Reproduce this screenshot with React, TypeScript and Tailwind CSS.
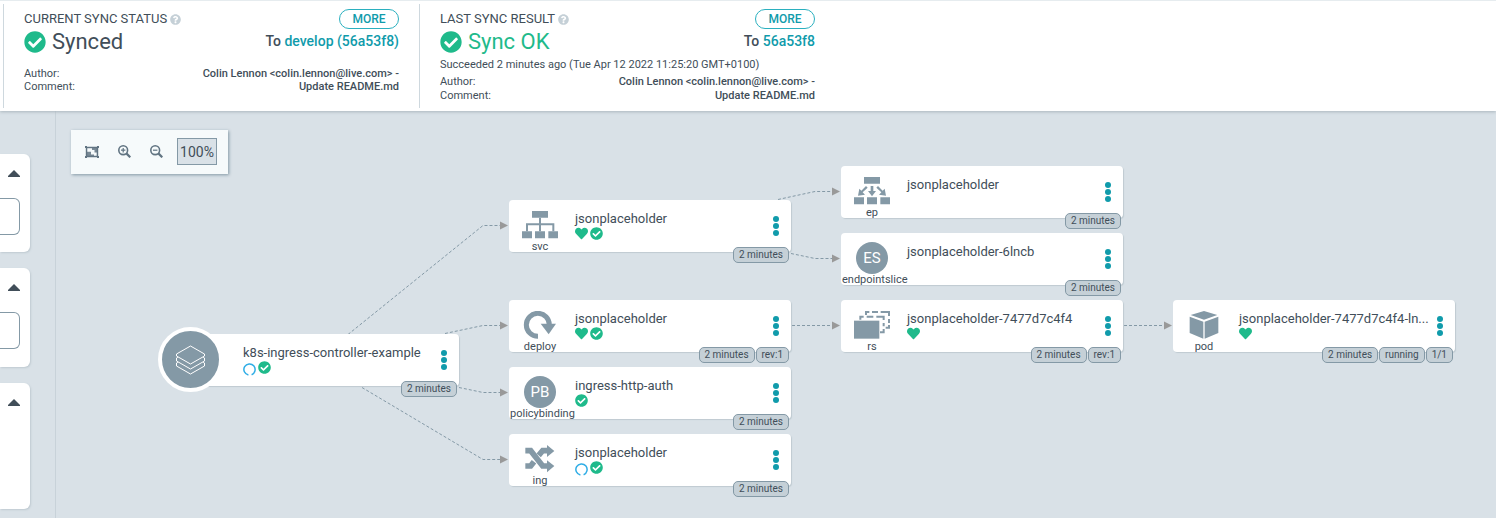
import type { ReactNode } from 'react';
import { FaCheckCircle, FaHeart, FaQuestionCircle } from 'react-icons/fa';

type Status = 'progressing' | 'healthy' | 'synced';

interface ResourceNode {
  id: string;
  name: string;
  kind?: string;
  icon: ReactNode;
  place: string;
  statuses: Status[];
  tags: string[];
}

function ServiceIcon() {
  return (
    <svg viewBox="0 0 108 84" className="h-7 w-9 fill-[#8499a6]" aria-hidden="true">
      <path d="M30 0h48v20H30zM0 61h30v21H0zM39 61h30v21H39zM79 61h29v21H79z" />
      <path d="M12 37h85v24h-6V43H57v18h-6V43H18v18h-6zM51 20h6v18h-6z" />
    </svg>
  );
}

function EndpointIcon() {
  return (
    <svg viewBox="0 0 108 84" className="h-7 w-9 fill-[#8499a6]" aria-hidden="true">
      <path d="M30 0h48v20H30zM0 61h30v21H0zM39 61h30v21H39zM79 61h29v21H79z" />
      <path d="M36 27l5 5-15 14 7 7-21 3 4-21 6 6zM72 27l-5 5 15 14-7 7 21 3-4-21-6 6zM50 27h8v15h8L54 58 42 42h8z" />
    </svg>
  );
}

function DeployIcon() {
  return (
    <svg viewBox="0 0 108 84" className="h-7 w-9" aria-hidden="true">
      <path d="M48 76A34.500 34.500 0 1 1 82 42" fill="none" stroke="#8499a6" strokeWidth="15" />
      <path d="M56 38h46L80 70z" fill="#8499a6" />
    </svg>
  );
}

function IngressIcon() {
  return (
    <svg viewBox="0 0 108 84" className="h-7 w-9" aria-hidden="true">
      <g fill="none" stroke="#8499a6" strokeWidth="17">
        <path d="M10 17h16l36 46h16" />
        <path d="M10 63h16l10-13M50 31l12-14h16" />
      </g>
      <path d="M75 0l22 18-22 18zM75 46l22 17-22 19z" fill="#8499a6" />
    </svg>
  );
}

function ReplicaSetIcon() {
  return (
    <svg viewBox="0 0 108 84" className="h-7 w-9" aria-hidden="true">
      <path d="M0 29h76v54H0z" fill="#8499a6" />
      <g fill="none" stroke="#8499a6" strokeWidth="6">
        <path d="M19 26V17h10M38 17h20M67 17h22v10M89 36v10M89 54v10H78" />
        <path d="M36 12V3h10M54 3h18M80 3h25v12M105 24v12M105 42v8H95" />
      </g>
    </svg>
  );
}

function PodIcon() {
  return (
    <svg viewBox="0 0 108 84" className="h-7 w-9 fill-[#8499a6]" aria-hidden="true">
      <path d="M54 0l40 12-40 14-40-14zM11 17l41 15v51L11 66zM97 17L56 32v51l41-17z" />
    </svg>
  );
}

function Initials({ text }: { text: string }) {
  return (
    <span className="flex size-8 items-center justify-center rounded-full bg-[#8499a6] text-[15px] text-white">
      {text}
    </span>
  );
}

function LayersIcon() {
  return (
    <svg viewBox="0 0 30 30" className="size-[30px]" fill="none" stroke="#fff" strokeWidth="1" strokeLinejoin="round" aria-hidden="true">
      <path d="M14.500 1l14 8v2l-14 8-14-8V9z" />
      <path d="M2 12L.5 13v3l14 8 14-8v-3L27 12" />
      <path d="M2 17L.5 18v3l14 8 14-8v-3L27 17" />
    </svg>
  );
}

function MagnifierIcon({ plus = false }: { plus?: boolean }) {
  return (
    <svg viewBox="0 0 13 13" className="size-[13px]" fill="none" stroke="currentColor" aria-hidden="true">
      <circle cx="5.200" cy="5.200" r="4.400" strokeWidth="1.600" />
      <path d="M8.600 8.600l3.700 3.700" strokeWidth="2.200" />
      <path d={plus ? 'M3 5.200h4.400M5.200 3v4.400' : 'M3 5.200h4.400'} strokeWidth="1.200" />
    </svg>
  );
}

function StatusIcon({ status }: { status: Status }) {
  if (status === 'healthy') return <FaHeart className="size-[13px] text-[#1fba8b]" title="Healthy" />;
  if (status === 'synced') return <FaCheckCircle className="size-[13px] text-[#1fba8b]" title="Synced" />;
  return (
    <svg viewBox="0 0 13 13" className="mt-0.5 size-[13px]" fill="none" role="img" aria-label="Progressing">
      <path d="M5.400 12A5.600 5.600 0 1 1 8.600 11.700" stroke="#2fade6" strokeWidth="1.500" />
    </svg>
  );
}

const nodes: ResourceNode[] = [
  { id: 'svc', name: 'jsonplaceholder', kind: 'svc', icon: <ServiceIcon />, place: 'left-[453px] top-[89px]', statuses: ['healthy', 'synced'], tags: ['2 minutes'] },
  { id: 'deploy', name: 'jsonplaceholder', kind: 'deploy', icon: <DeployIcon />, place: 'left-[453px] top-[189px]', statuses: ['healthy', 'synced'], tags: ['2 minutes', 'rev:1'] },
  { id: 'pb', name: 'ingress-http-auth', kind: 'policybinding', icon: <Initials text="PB" />, place: 'left-[453px] top-[256px]', statuses: ['synced'], tags: ['2 minutes'] },
  { id: 'ing', name: 'jsonplaceholder', kind: 'ing', icon: <IngressIcon />, place: 'left-[453px] top-[323px]', statuses: ['progressing', 'synced'], tags: ['2 minutes'] },
  { id: 'ep', name: 'jsonplaceholder', kind: 'ep', icon: <EndpointIcon />, place: 'left-[785px] top-[55px]', statuses: [], tags: ['2 minutes'] },
  { id: 'es', name: 'jsonplaceholder-6lncb', kind: 'endpointslice', icon: <Initials text="ES" />, place: 'left-[785px] top-[122px]', statuses: [], tags: ['2 minutes'] },
  { id: 'rs', name: 'jsonplaceholder-7477d7c4f4', kind: 'rs', icon: <ReplicaSetIcon />, place: 'left-[785px] top-[189px]', statuses: ['healthy'], tags: ['2 minutes', 'rev:1'] },
  { id: 'pod', name: 'jsonplaceholder-7477d7c4f4-ln...', kind: 'pod', icon: <PodIcon />, place: 'left-[1117px] top-[189px]', statuses: ['healthy'], tags: ['2 minutes', 'running', '1/1'] },
];

const root: ResourceNode = {
  id: 'root', name: 'k8s-ingress-controller-example', icon: null, place: 'left-[121px] top-[223px]', statuses: ['progressing', 'synced'], tags: ['2 minutes'],
};

function NodeCard({ node }: { node: ResourceNode }) {
  return (
    <article className={`absolute flex h-[52px] w-[282px] rounded bg-white shadow-[1px_1px_1px_#bfcad1] ${node.place}`}>
      {node.kind ? (
        <div className="flex w-[66px] shrink-0 pt-[9px] pl-px">
          <div className="w-[60px]">
            <div className="flex h-8 items-center justify-center">{node.icon}</div>
            <div className="text-center text-[11px] leading-[11px]">{node.kind}</div>
          </div>
        </div>
      ) : (
        <div className="w-[66px] shrink-0">
          <div className="absolute -top-[7px] -left-[19px] flex size-[65px] items-center justify-center rounded-full border-4 border-white bg-[#8499a6]">
            <LayersIcon />
          </div>
        </div>
      )}
      <div className="min-w-0 flex-1 pt-[11px]">
        <h3 className="text-[13px] leading-4 whitespace-nowrap">{node.name}</h3>
        <div className="flex items-start gap-0.5">
          {node.statuses.map((s) => <StatusIcon key={s} status={s} />)}
        </div>
      </div>
      <button type="button" aria-label={`Actions for ${node.name}`} className="flex w-[30px] shrink-0 items-center justify-center">
        <svg viewBox="0 0 6 20" className="h-5 w-1.5 fill-[#109bab]" aria-hidden="true">
          <circle cx="3" cy="3" r="3" />
          <circle cx="3" cy="10" r="3" />
          <circle cx="3" cy="17" r="3" />
        </svg>
      </button>
      <div className="absolute right-0.5 -bottom-[11px] flex gap-px">
        {node.tags.map((tag) => (
          <span key={tag} className="h-4 rounded-[5px] border border-[#8499a6] bg-[#c5d0d7] px-[5px] text-[10px] leading-[14px] whitespace-nowrap">
            {tag}
          </span>
        ))}
      </div>
    </article>
  );
}

const edges = [
  'M292 223L427 114H444',
  'M389 222L427 214H444',
  'M403 276L427 281H444',
  'M306 276L427 348H444',
  'M722 88L759 80H776',
  'M735 142L759 147H776',
  'M736 214H776',
  'M1068 214H1108',
];

const arrowHeads = [[444, 114], [444, 214], [444, 281], [444, 348], [776, 80], [776, 147], [776, 214], [1108, 214]];

function Edges() {
  return (
    <svg className="absolute top-0 left-0 h-[407px] w-[1440px]" viewBox="0 0 1440 407" aria-hidden="true">
      <g transform="translate(0 .5)">
        {edges.map((d) => <path key={d} d={d} fill="none" stroke="#8499a6" strokeDasharray="3 2" />)}
        {arrowHeads.map(([x, y]) => <path key={`${x}-${y}`} d={`M${x} ${y - 4}l8 4-8 4z`} fill="#999" />)}
      </g>
    </svg>
  );
}

interface SyncPanelProps {
  title: string;
  state: string;
  stateColor: string;
  revision: string;
  note?: string;
}

function SyncPanel({ title, state, stateColor, revision, note }: SyncPanelProps) {
  return (
    <section className="w-[416px] border-l border-[#ced8de] px-5 pt-[5px]">
      <div className="flex h-5 items-center justify-between">
        <h2 className="flex items-center gap-[3px] text-[13px]">
          {title}
          <FaQuestionCircle className="size-[11px] text-[#c5d0d7]" />
        </h2>
        <button type="button" className="h-5 w-[60px] rounded-full border border-[#2bb0bf] text-[12px] leading-[18px] font-medium text-[#109bab]">
          MORE
        </button>
      </div>
      <div className="flex h-[25px] items-center justify-between">
        <div className={`flex items-center gap-1.5 text-[22px] ${stateColor}`}>
          <FaCheckCircle className="size-[22px] text-[#1fba8b]" />
          {state}
        </div>
        <div className="text-[14px] font-medium">
          To <a href="#revision" className="text-[#109bab]">{revision}</a>
        </div>
      </div>
      {note && <p className="mt-0.5 text-[11px] leading-[18px]">{note}</p>}
      <dl className={note ? 'mt-px grid grid-cols-[auto_1fr] text-[11px] leading-[14px]' : 'mt-[13px] grid grid-cols-[auto_1fr] text-[11px] leading-[13px]'}>
        <dt>Author:</dt>
        <dd className="text-right font-medium">Colin Lennon &lt;colin.lennon@live.com&gt; -</dd>
        <dt>Comment:</dt>
        <dd className="text-right font-medium">Update README.md</dd>
      </dl>
    </section>
  );
}

function FilterCard({ label, height, hasInput }: { label: string; height: string; hasInput: boolean }) {
  return (
    <section className={`w-[30px] rounded-r-md bg-white pt-4 pr-2.5 shadow-[1px_1px_2px_#bfcad1] ${height}`}>
      <button type="button" aria-label={`Collapse ${label}`} className="ml-auto block">
        <svg viewBox="0 0 12 7" className="h-[7px] w-3 fill-[#414e59]" aria-hidden="true">
          <path d="M6 0l6 6v1H0V6z" />
        </svg>
      </button>
      {hasInput && (
        <input aria-label={label} className="mt-[21px] block h-[37px] w-full rounded-r-md border border-l-0 border-[#8499a6] bg-white" />
      )}
    </section>
  );
}

export default function App() {
  return (
    <div className="flex min-h-screen flex-col overflow-hidden bg-[#d9e1e7] font-[Roboto,sans-serif] text-[#414e59]">
      <header className="relative z-10 flex h-[111px] border-t border-[#e6ecef] bg-white py-[3px] pl-[3px] shadow-[0_1px_3px_#aab6be]">
        <SyncPanel title="CURRENT SYNC STATUS" state="Synced" stateColor="text-[#414e59]" revision="develop (56a53f8)" />
        <SyncPanel
          title="LAST SYNC RESULT"
          state="Sync OK"
          stateColor="text-[#1fba8b]"
          revision="56a53f8"
          note="Succeeded 2 minutes ago (Tue Apr 12 2022 11:25:20 GMT+0100)"
        />
      </header>
      <div className="flex flex-1">
        <aside className="flex w-14 shrink-0 flex-col gap-4 border-r border-[#c8d2d9] pt-[43px]">
          <FilterCard label="Name" height="h-[98px]" hasInput />
          <FilterCard label="Kinds" height="h-[99px]" hasInput />
          <FilterCard label="Sync status" height="h-[126px]" hasInput={false} />
        </aside>
        <main className="relative min-w-0 flex-1">
          <Edges />
          <div className="relative mt-[19px] ml-[15px] flex h-11 w-fit items-center bg-[#f6fafb] pr-[11px] pb-px pl-[5px] text-[#617482] shadow-[1px_1px_3px_#8499a6]">
            <button type="button" aria-label="Fit to screen" className="flex size-8 items-center justify-center">
              <svg viewBox="0 0 14 12" className="h-3 w-3.5 fill-current" aria-hidden="true">
                <path fillRule="evenodd" d="M0 0h2v.7h10V0h2v2h-.8v8h.8v2h-2v-.7H2v.7H0v-2h.8V2H0zM2.300 2.200v7.600h9.400V2.200z" />
                <path d="M2 2h4v5H2zM2 7h4v1.500h3V10H2zM7 2h5v4.500H9.500V4H7z" opacity=".85" />
                <path d="M2.300 2.200h3.800v3.600H2.300zM6.500 6.500h2v1.300h-2z" fill="#f6fafb" />
              </svg>
            </button>
            <button type="button" aria-label="Zoom in" className="flex size-8 items-center justify-center">
              <MagnifierIcon plus />
            </button>
            <button type="button" aria-label="Zoom out" className="flex size-8 items-center justify-center">
              <MagnifierIcon />
            </button>
            <input
              aria-label="Zoom level"
              defaultValue="100%"
              className="ml-[5px] h-[27px] w-10 border border-[#8499a6] bg-[#d9e1e7] text-center text-[14px] text-[#414e59]"
            />
          </div>
          <NodeCard node={root} />
          {nodes.map((n) => <NodeCard key={n.id} node={n} />)}
        </main>
      </div>
    </div>
  );
}
